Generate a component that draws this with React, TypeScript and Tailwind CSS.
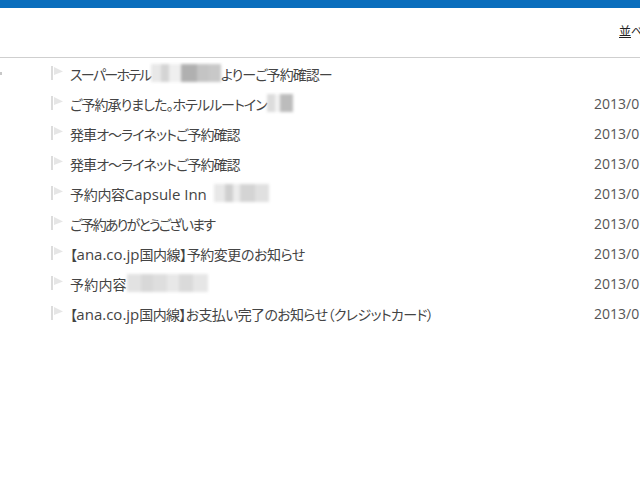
const font = { fontFamily: '"Open Sans", "Noto Sans CJK JP", sans-serif' };

type Patch = { w: number; c: string };

type Row = {
  before: string;
  track: string;
  patch?: Patch[];
  after?: string;
  date?: string;
  gap?: boolean;
};

const rows: Row[] = [
  {
    before: 'スーパーホテル',
    track: 'tracking-[-1.7px]',
    patch: [
      { w: 10, c: '#e8e8e8' },
      { w: 8, c: '#d4d4d4' },
      { w: 12, c: '#efefef' },
      { w: 16, c: '#b0b0b0' },
      { w: 12, c: '#c4c4c4' },
      { w: 12, c: '#c8c8c8' },
    ],
    after: 'よりーご予約確認ー',
  },
  {
    before: 'ご予約承りました。ホテルルートイン',
    track: 'tracking-[-0.95px]',
    patch: [
      { w: 8, c: '#dcdcdc' },
      { w: 5, c: '#f2f2f2' },
      { w: 13, c: '#bcbcbc' },
    ],
    date: '2013/0',
  },
  { before: '発車オ〜ライネットご予約確認', track: 'tracking-[-0.95px]', date: '2013/0' },
  { before: '発車オ〜ライネットご予約確認', track: 'tracking-[-0.95px]', date: '2013/0' },
  {
    before: '予約内容Capsule Inn',
    track: 'tracking-[-0.3px]',
    patch: [
      { w: 11, c: '#e8e8e8' },
      { w: 8, c: '#cfcfcf' },
      { w: 7, c: '#ececec' },
      { w: 15, c: '#d4d4d4' },
      { w: 14, c: '#e0e0e0' },
    ],
    date: '2013/0',
    gap: true,
  },
  { before: 'ご予約ありがとうございます', track: 'tracking-[-1.8px]', date: '2013/0' },
  { before: '【ana.co.jp国内線】予約変更のお知らせ', track: 'tracking-[-0.45px]', date: '2013/0' },
  {
    before: '予約内容',
    track: 'tracking-[0.2px]',
    patch: [
      { w: 14, c: '#e2e2e2' },
      { w: 12, c: '#d8d8d8' },
      { w: 14, c: '#dedede' },
      { w: 12, c: '#e8e8e8' },
      { w: 14, c: '#dadada' },
      { w: 15, c: '#e6e6e6' },
    ],
    date: '2013/0',
  },
  {
    before: '【ana.co.jp国内線】お支払い完了のお知らせ（クレジットカード）',
    track: 'tracking-[-0.65px]',
    date: '2013/0',
  },
];

function Flag() {
  return (
    <svg viewBox="0 0 14 16" className="w-[14px] h-4 shrink-0" aria-hidden>
      <rect x="0" y="1" width="2" height="14" fill="#dcdcdc" />
      <path d="M3 2 L12 6.5 L3 10 Z" fill="#e6e6e6" />
    </svg>
  );
}

function BlurPatch({ cells, gap }: { cells: Patch[]; gap?: boolean }) {
  return (
    <span className={`flex h-[18px] shrink-0 blur-[1.5px] ${gap ? 'ml-[7px]' : ''}`}>
      {cells.map((cell, i) => (
        <span key={i} className="h-full" style={{ width: cell.w, background: cell.c }} />
      ))}
    </span>
  );
}

// latin runs keep normal spacing, only the japanese is packed tight
function Mixed({ text, track }: { text: string; track: string }) {
  return (
    <span className={`pt-[2px] ${track}`}>
      {text.split(/([A-Za-z.][A-Za-z. ]*)/).map((part, i) =>
        i % 2 === 1 ? (
          <span key={i} className="text-[15px] tracking-normal">
            {part}
          </span>
        ) : (
          <span key={i}>{part}</span>
        ),
      )}
    </span>
  );
}

export default function App() {
  return (
    <div className="w-[640px] h-[480px] overflow-hidden bg-white" style={font}>
      <div className="h-2 bg-[#0a6ebd]" />
      <div className="h-[50px] border-b border-[#cfcfcf] flex justify-end items-center whitespace-nowrap overflow-hidden">
        <span className="w-[21px] overflow-hidden text-[12px] text-[#222] -mt-[1px]">
          <span className="underline">並</span>べ替え
        </span>
      </div>
      <ul>
        {rows.map((row, i) => (
          <li key={i} className="h-[30px] flex items-center relative whitespace-nowrap">
            {i === 0 && <span className="absolute left-0 top-[14px] w-[2px] h-[3px] bg-[#c8c8c8]" />}
            <span className="ml-[51px] w-[19px] flex shrink-0">
              <Flag />
            </span>
            <span className="w-[524px] shrink-0 flex items-center text-[14px] text-[#444] overflow-hidden [font-feature-settings:'palt']">
              <Mixed text={row.before} track={row.track} />
              {row.patch && <BlurPatch cells={row.patch} gap={row.gap} />}
              {row.after && <Mixed text={row.after} track="tracking-[-0.95px]" />}
            </span>
            <span className="shrink-0 text-[14px] text-[#555]">{row.date}</span>
          </li>
        ))}
      </ul>
    </div>
  );
}
